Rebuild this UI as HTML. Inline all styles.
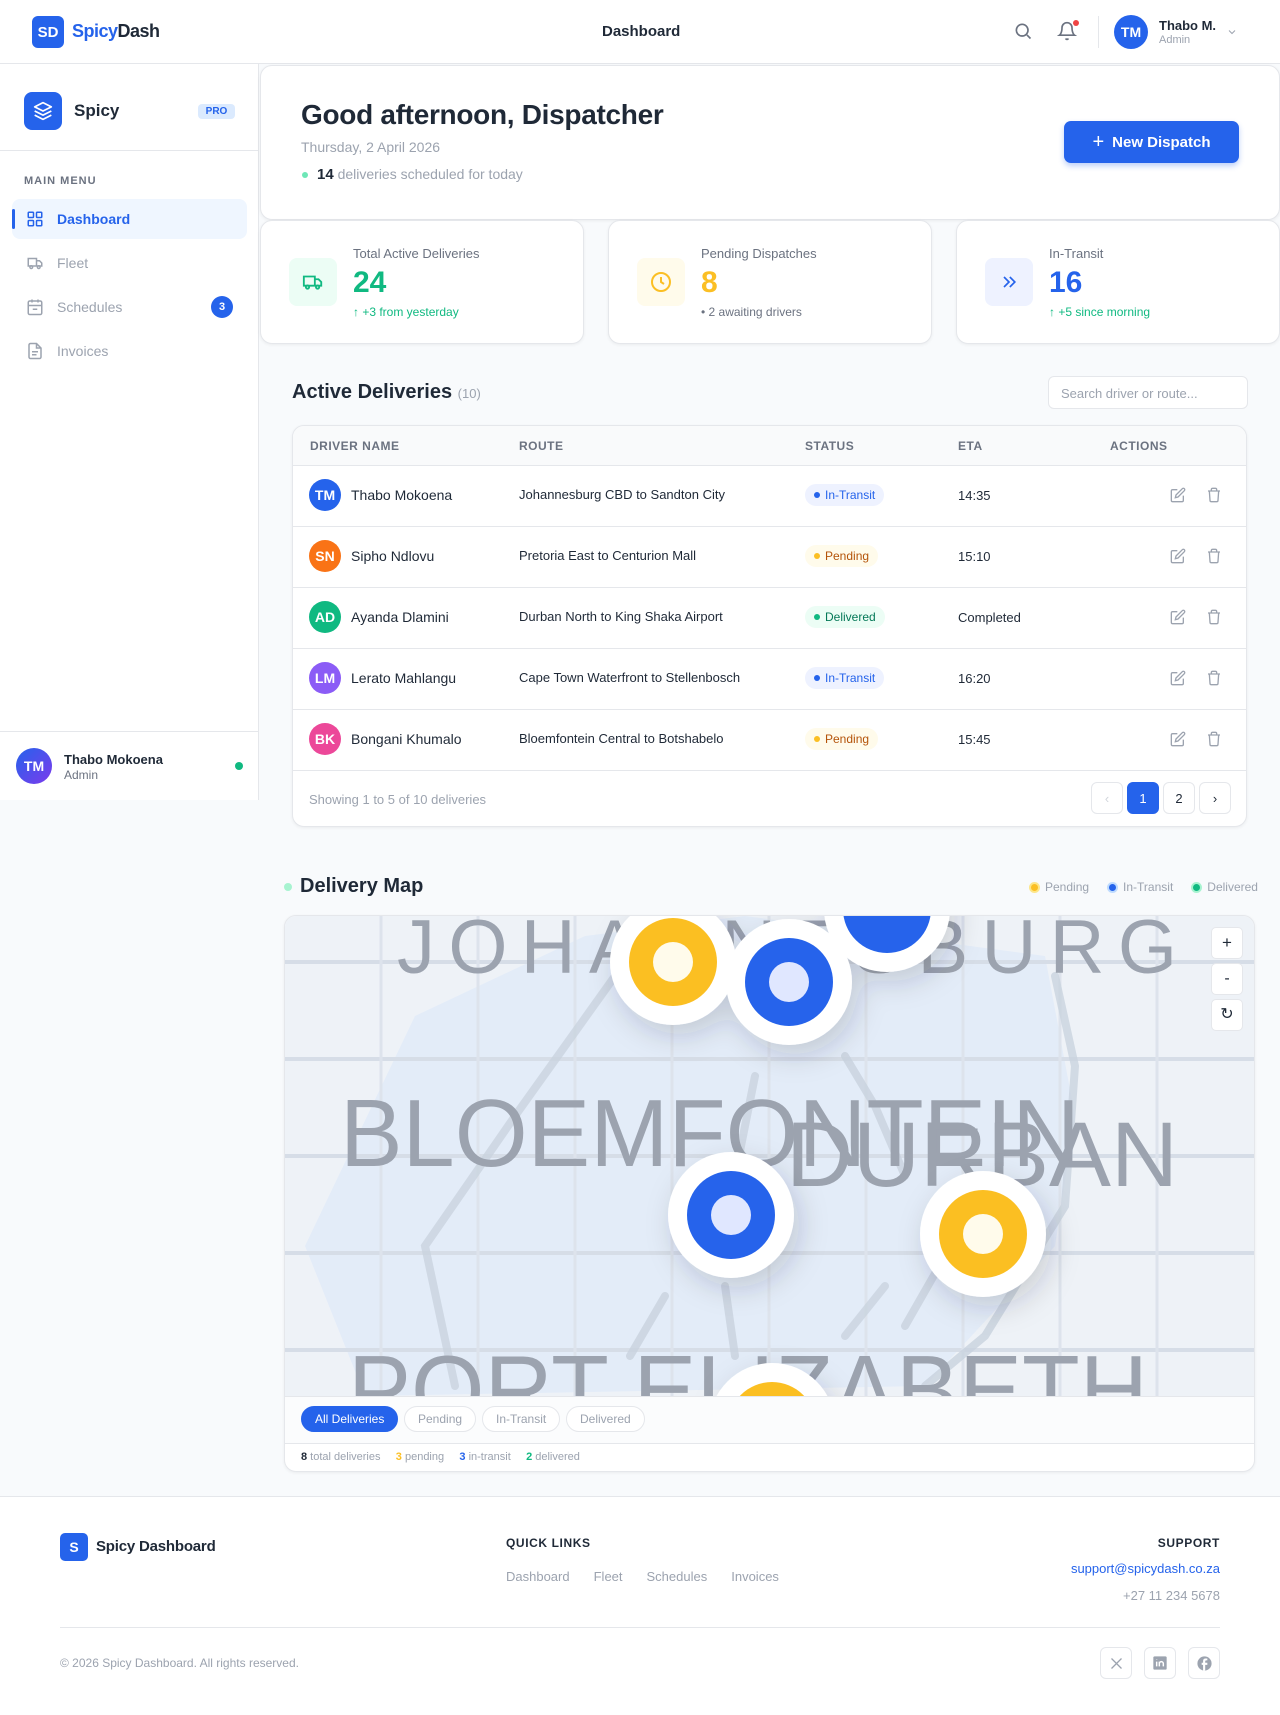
<!DOCTYPE html>
<html><head><meta charset="utf-8">
<style>
*{box-sizing:border-box;margin:0;padding:0}
body{width:1280px;height:1715px;background:#f8fafc;font-family:"Liberation Sans",sans-serif;color:#1f2937;position:relative;overflow:hidden}
.abs{position:absolute}
.hdr{left:0;top:0;width:1280px;height:64px;background:#fff;border-bottom:1px solid #e5e7eb}
.side{left:0;top:64px;width:259px;height:736px;background:#fff;border-right:1px solid #e5e7eb}
.card{background:#fff;border:1px solid #e5e7eb;border-radius:12px;box-shadow:0 1px 3px rgba(0,0,0,.06)}
.nav{left:12px;width:235px;height:40px;border-radius:8px;display:flex;align-items:center;padding-left:14px;font-size:14px;color:#9ca3af}
.nav svg{margin-right:13px}
.th{font-size:12px;color:#6b7280;letter-spacing:.5px;font-weight:bold;top:439px}
.row{left:293px;width:953px;height:61px;border-top:1px solid #e5e7eb}
.av{width:32px;height:32px;border-radius:50%;color:#fff;font-weight:bold;font-size:14px;display:flex;align-items:center;justify-content:center}
.badge{height:22px;border-radius:11px;font-size:12px;padding:0 9px;display:flex;align-items:center}
.badge i{width:6px;height:6px;border-radius:50%;display:inline-block;margin-right:5px}
.chip{height:26px;border-radius:13px;border:1px solid #e5e7eb;font-size:12px;color:#9ca3af;display:flex;align-items:center;padding:0 13px;background:#fff}
.pg{width:32px;height:32px;border:1px solid #e5e7eb;border-radius:6px;display:flex;align-items:center;justify-content:center;font-size:13px;background:#fff}
.soc{width:32px;height:32px;border:1px solid #e5e7eb;border-radius:6px;display:flex;align-items:center;justify-content:center}
</style></head><body>

<!-- header -->
<div class="abs hdr"></div>
<div class="abs" style="left:32px;top:16px;width:32px;height:32px;background:#2563eb;border-radius:6px;color:#fff;font-weight:bold;font-size:15px;display:flex;align-items:center;justify-content:center">SD</div>
<div class="abs" style="left:72px;top:21px;font-size:18px;font-weight:bold;letter-spacing:-.5px"><span style="color:#2563eb">Spicy</span>Dash</div>
<div class="abs" style="left:602px;top:23px;font-size:15px;font-weight:bold">Dashboard</div>
<svg class="abs" style="left:1013px;top:21px" width="20" height="20" viewBox="0 0 24 24" fill="none" stroke="#6b7280" stroke-width="2"><circle cx="11" cy="11" r="7"/><path d="M21 21l-4.3-4.3"/></svg>
<svg class="abs" style="left:1057px;top:21px" width="20" height="20" viewBox="0 0 24 24" fill="none" stroke="#6b7280" stroke-width="2"><path d="M6 8a6 6 0 0112 0c0 7 3 9 3 9H3s3-2 3-9M10.3 21a1.9 1.9 0 003.4 0"/></svg>
<div class="abs" style="left:1073px;top:20px;width:6px;height:6px;border-radius:50%;background:#ef4444"></div>
<div class="abs" style="left:1098px;top:16px;width:1px;height:32px;background:#e5e7eb"></div>
<div class="abs av" style="left:1114px;top:15px;width:34px;height:34px;background:#2563eb">TM</div>
<div class="abs" style="left:1159px;top:18px;font-size:13px;font-weight:bold">Thabo M.</div>
<div class="abs" style="left:1159px;top:34px;font-size:11px;color:#9ca3af">Admin</div>
<svg class="abs" style="left:1226px;top:26px" width="12" height="12" viewBox="0 0 24 24" fill="none" stroke="#9ca3af" stroke-width="2"><path d="M6 9l6 6 6-6"/></svg>

<!-- sidebar -->
<div class="abs side"></div>
<div class="abs" style="left:24px;top:92px;width:38px;height:38px;background:#2563eb;border-radius:8px;display:flex;align-items:center;justify-content:center"><svg width="20" height="20" viewBox="0 0 24 24" fill="none" stroke="#fff" stroke-width="2" stroke-linejoin="round"><path d="M12 2L2 7l10 5 10-5-10-5zM2 17l10 5 10-5M2 12l10 5 10-5"/></svg></div>
<div class="abs" style="left:74px;top:101px;font-size:17px;font-weight:bold">Spicy</div>
<div class="abs" style="left:198px;top:104px;width:37px;height:15px;background:#dbeafe;color:#2563eb;font-size:10px;font-weight:bold;border-radius:4px;text-align:center;line-height:15px">PRO</div>
<div class="abs" style="left:0;top:150px;width:259px;height:1px;background:#e5e7eb"></div>
<div class="abs" style="left:24px;top:175px;font-size:11px;font-weight:bold;color:#6b7280;letter-spacing:1px">MAIN MENU</div>
<div class="abs nav" style="top:199px;background:#eff6ff;color:#2563eb;font-weight:bold"><svg width="18" height="18" viewBox="0 0 24 24" fill="none" stroke="#2563eb" stroke-width="2"><rect x="3" y="3" width="7" height="7" rx="1"/><rect x="14" y="3" width="7" height="7" rx="1"/><rect x="3" y="14" width="7" height="7" rx="1"/><rect x="14" y="14" width="7" height="7" rx="1"/></svg>Dashboard</div>
<div class="abs" style="left:12px;top:209px;width:3px;height:20px;background:#2563eb;border-radius:2px"></div>
<div class="abs nav" style="top:243px"><svg width="18" height="18" viewBox="0 0 24 24" fill="none" stroke="#9ca3af" stroke-width="2"><path d="M3 6h11v10H3zM14 9h4l3 3v4h-7"/><circle cx="7" cy="17.5" r="1.8"/><circle cx="17" cy="17.5" r="1.8"/></svg>Fleet</div>
<div class="abs nav" style="top:287px"><svg width="18" height="18" viewBox="0 0 24 24" fill="none" stroke="#9ca3af" stroke-width="2"><rect x="3" y="4" width="18" height="18" rx="2"/><path d="M16 2v4M8 2v4M3 10h18M9 15h6"/></svg>Schedules</div>
<div class="abs av" style="left:211px;top:296px;width:22px;height:22px;background:#2563eb;font-size:11px">3</div>
<div class="abs nav" style="top:331px"><svg width="18" height="18" viewBox="0 0 24 24" fill="none" stroke="#9ca3af" stroke-width="2"><path d="M14 2H6a2 2 0 00-2 2v16a2 2 0 002 2h12a2 2 0 002-2V8zM14 2v6h6M8 13h8M8 17h6"/></svg>Invoices</div>
<div class="abs" style="left:0;top:731px;width:259px;height:1px;background:#e5e7eb"></div>
<div class="abs av" style="left:16px;top:748px;width:36px;height:36px;background:linear-gradient(135deg,#2563eb,#7c3aed)">TM</div>
<div class="abs" style="left:64px;top:752px;font-size:13px;font-weight:bold">Thabo Mokoena</div>
<div class="abs" style="left:64px;top:768px;font-size:12px;color:#6b7280">Admin</div>
<div class="abs" style="left:235px;top:762px;width:8px;height:8px;border-radius:50%;background:#10b981"></div>

<!-- hero -->
<div class="abs card" style="left:260px;top:65px;width:1020px;height:155px"></div>
<div class="abs" style="left:301px;top:99px;font-size:28px;font-weight:bold;letter-spacing:-.3px">Good afternoon, Dispatcher</div>
<div class="abs" style="left:301px;top:139px;font-size:14px;color:#9ca3af">Thursday, 2 April 2026</div>
<div class="abs" style="left:302px;top:172px;width:6px;height:6px;border-radius:50%;background:#6ee7b7"></div>
<div class="abs" style="left:317px;top:166px;font-size:14px;color:#9ca3af"><b style="color:#1f2937;font-size:15px">14</b> deliveries scheduled for today</div>
<div class="abs" style="left:1064px;top:121px;width:175px;height:42px;background:#2563eb;border-radius:7px;color:#fff;font-size:15px;font-weight:bold;display:flex;align-items:center;justify-content:center;box-shadow:0 3px 6px rgba(37,99,235,.3)"><span style="font-size:20px;margin-right:8px;font-weight:normal">+</span>New Dispatch</div>

<!-- stats -->
<div class="abs card" style="left:260px;top:220px;width:324px;height:124px"></div>
<div class="abs card" style="left:608px;top:220px;width:324px;height:124px"></div>
<div class="abs card" style="left:956px;top:220px;width:324px;height:124px"></div>
<div class="abs" style="left:289px;top:258px;width:48px;height:48px;border-radius:8px;background:#ecfdf5;display:flex;align-items:center;justify-content:center"><svg width="22" height="22" viewBox="0 0 24 24" fill="none" stroke="#10b981" stroke-width="2"><path d="M2 6h12v10H2zM14 9h4l3 3v4h-7"/><circle cx="6" cy="17.5" r="1.8"/><circle cx="17" cy="17.5" r="1.8"/></svg></div>
<div class="abs" style="left:353px;top:246px;font-size:13px;color:#6b7280">Total Active Deliveries</div>
<div class="abs" style="left:353px;top:266px;font-size:30px;font-weight:bold;color:#10b981">24</div>
<div class="abs" style="left:353px;top:305px;font-size:12px;color:#10b981">↑ +3 from yesterday</div>
<div class="abs" style="left:637px;top:258px;width:48px;height:48px;border-radius:8px;background:#fffbeb;display:flex;align-items:center;justify-content:center"><svg width="24" height="24" viewBox="0 0 24 24" fill="none" stroke="#fbbf24" stroke-width="2"><circle cx="12" cy="12" r="9"/><path d="M12 7v5l3 2"/></svg></div>
<div class="abs" style="left:701px;top:246px;font-size:13px;color:#6b7280">Pending Dispatches</div>
<div class="abs" style="left:701px;top:266px;font-size:30px;font-weight:bold;color:#fbbf24">8</div>
<div class="abs" style="left:701px;top:305px;font-size:12px;color:#6b7280">• 2 awaiting drivers</div>
<div class="abs" style="left:985px;top:258px;width:48px;height:48px;border-radius:8px;background:#eef2ff;display:flex;align-items:center;justify-content:center"><svg width="20" height="20" viewBox="0 0 24 24" fill="none" stroke="#2563eb" stroke-width="2"><path d="M6 6l6 6-6 6M13 6l6 6-6 6"/></svg></div>
<div class="abs" style="left:1049px;top:246px;font-size:13px;color:#6b7280">In-Transit</div>
<div class="abs" style="left:1049px;top:266px;font-size:30px;font-weight:bold;color:#2563eb">16</div>
<div class="abs" style="left:1049px;top:305px;font-size:12px;color:#10b981">↑ +5 since morning</div>

<!-- table -->
<div class="abs" style="left:292px;top:381px;font-size:20px;font-weight:bold">Active Deliveries <span style="font-size:13px;color:#9ca3af;font-weight:normal">(10)</span></div>
<div class="abs" style="left:1048px;top:376px;width:200px;height:33px;border:1px solid #e5e7eb;border-radius:6px;background:#fff;font-size:13px;color:#9ca3af;padding:9px 12px">Search driver or route...</div>
<div class="abs card" style="left:292px;top:425px;width:955px;height:402px;overflow:hidden"><div style="height:40px;background:#f9fafb"></div></div>
<div class="abs th" style="left:310px">DRIVER NAME</div>
<div class="abs th" style="left:519px">ROUTE</div>
<div class="abs th" style="left:805px">STATUS</div>
<div class="abs th" style="left:958px">ETA</div>
<div class="abs th" style="left:1110px">ACTIONS</div>

<div class="abs row" style="top:465px"></div>
<div class="abs row" style="top:526px"></div>
<div class="abs row" style="top:587px"></div>
<div class="abs row" style="top:648px"></div>
<div class="abs row" style="top:709px"></div>
<div class="abs row" style="top:770px"></div>

<div class="abs" style="left:309px;top:479px;width:900px;height:300px;font-size:14px">
 <div style="position:absolute;top:0"><div class="av" style="background:#2563eb">TM</div></div>
 <div style="position:absolute;left:42px;top:8px">Thabo Mokoena</div>
 <div style="position:absolute;left:210px;top:8px;font-size:13px">Johannesburg CBD to Sandton City</div>
 <div class="badge" style="position:absolute;left:496px;top:5px;background:#eef2ff;color:#2563eb"><i style="background:#2563eb"></i>In-Transit</div>
 <div style="position:absolute;left:649px;top:9px;font-size:13px">14:35</div>

 <div style="position:absolute;top:61px"><div class="av" style="background:#f97316">SN</div></div>
 <div style="position:absolute;left:42px;top:69px">Sipho Ndlovu</div>
 <div style="position:absolute;left:210px;top:69px;font-size:13px">Pretoria East to Centurion Mall</div>
 <div class="badge" style="position:absolute;left:496px;top:66px;background:#fffbeb;color:#b45309"><i style="background:#fbbf24"></i>Pending</div>
 <div style="position:absolute;left:649px;top:70px;font-size:13px">15:10</div>

 <div style="position:absolute;top:122px"><div class="av" style="background:#10b981">AD</div></div>
 <div style="position:absolute;left:42px;top:130px">Ayanda Dlamini</div>
 <div style="position:absolute;left:210px;top:130px;font-size:13px">Durban North to King Shaka Airport</div>
 <div class="badge" style="position:absolute;left:496px;top:127px;background:#ecfdf5;color:#047857"><i style="background:#10b981"></i>Delivered</div>
 <div style="position:absolute;left:649px;top:131px;font-size:13px">Completed</div>

 <div style="position:absolute;top:183px"><div class="av" style="background:#8b5cf6">LM</div></div>
 <div style="position:absolute;left:42px;top:191px">Lerato Mahlangu</div>
 <div style="position:absolute;left:210px;top:191px;font-size:13px">Cape Town Waterfront to Stellenbosch</div>
 <div class="badge" style="position:absolute;left:496px;top:188px;background:#eef2ff;color:#2563eb"><i style="background:#2563eb"></i>In-Transit</div>
 <div style="position:absolute;left:649px;top:192px;font-size:13px">16:20</div>

 <div style="position:absolute;top:244px"><div class="av" style="background:#ec4899">BK</div></div>
 <div style="position:absolute;left:42px;top:252px">Bongani Khumalo</div>
 <div style="position:absolute;left:210px;top:252px;font-size:13px">Bloemfontein Central to Botshabelo</div>
 <div class="badge" style="position:absolute;left:496px;top:249px;background:#fffbeb;color:#b45309"><i style="background:#fbbf24"></i>Pending</div>
 <div style="position:absolute;left:649px;top:253px;font-size:13px">15:45</div>
</div>
<svg width="0" height="0" style="position:absolute"><defs>
<g id="ed"><path d="M11 4H4a2 2 0 00-2 2v14a2 2 0 002 2h14a2 2 0 002-2v-7M18.5 2.5a2.1 2.1 0 013 3L12 15l-4 1 1-4z" fill="none" stroke="#9ca3af" stroke-width="2"/></g>
<g id="tr"><path d="M3 6h18M8 6V4a2 2 0 012-2h4a2 2 0 012 2v2M19 6l-1 14a2 2 0 01-2 2H8a2 2 0 01-2-2L5 6" fill="none" stroke="#9ca3af" stroke-width="2"/></g>
</defs></svg>
<svg class="abs" style="left:1170px;top:487px" width="16" height="16" viewBox="0 0 24 24"><use href="#ed"/></svg><svg class="abs" style="left:1206px;top:487px" width="16" height="16" viewBox="0 0 24 24"><use href="#tr"/></svg>
<svg class="abs" style="left:1170px;top:548px" width="16" height="16" viewBox="0 0 24 24"><use href="#ed"/></svg><svg class="abs" style="left:1206px;top:548px" width="16" height="16" viewBox="0 0 24 24"><use href="#tr"/></svg>
<svg class="abs" style="left:1170px;top:609px" width="16" height="16" viewBox="0 0 24 24"><use href="#ed"/></svg><svg class="abs" style="left:1206px;top:609px" width="16" height="16" viewBox="0 0 24 24"><use href="#tr"/></svg>
<svg class="abs" style="left:1170px;top:670px" width="16" height="16" viewBox="0 0 24 24"><use href="#ed"/></svg><svg class="abs" style="left:1206px;top:670px" width="16" height="16" viewBox="0 0 24 24"><use href="#tr"/></svg>
<svg class="abs" style="left:1170px;top:731px" width="16" height="16" viewBox="0 0 24 24"><use href="#ed"/></svg><svg class="abs" style="left:1206px;top:731px" width="16" height="16" viewBox="0 0 24 24"><use href="#tr"/></svg>
<div class="abs" style="left:309px;top:792px;font-size:13px;color:#9ca3af">Showing 1 to 5 of 10 deliveries</div>
<div class="abs pg" style="left:1091px;top:782px;color:#d1d5db">‹</div>
<div class="abs pg" style="left:1127px;top:782px;background:#2563eb;color:#fff;border-color:#2563eb">1</div>
<div class="abs pg" style="left:1163px;top:782px">2</div>
<div class="abs pg" style="left:1199px;top:782px">›</div>

<!-- map -->
<div class="abs" style="left:284px;top:883px;width:8px;height:8px;border-radius:50%;background:#a7f3d0"></div>
<div class="abs" style="left:300px;top:875px;font-size:20px;font-weight:bold">Delivery Map</div>
<div class="abs" style="left:1029px;top:880px;font-size:12px;color:#9ca3af;display:flex;align-items:center;gap:5px">
<i style="width:11px;height:11px;border-radius:50%;background:#fbbf24;border:2px solid #fde68a"></i>Pending<span style="width:8px"></span>
<i style="width:11px;height:11px;border-radius:50%;background:#2563eb;border:2px solid #bfdbfe"></i>In-Transit<span style="width:8px"></span>
<i style="width:11px;height:11px;border-radius:50%;background:#10b981;border:2px solid #a7f3d0"></i>Delivered</div>
<div class="abs card" style="left:284px;top:915px;width:971px;height:557px;overflow:hidden">
<svg width="971" height="480" style="display:block;background:#eef2f7">
<defs><filter id="sh" x="-50%" y="-50%" width="200%" height="200%"><feDropShadow dx="6" dy="10" stdDeviation="14" flood-color="#1e293b" flood-opacity=".18"/></filter></defs>
<path d="M300 20 L460 0 L760 40 L790 200 L770 330 L640 470 L80 480 L20 330 L130 100 Z" fill="#e3ecf8"/>
<g stroke="#d6dde7" stroke-width="4">
<line x1="0" y1="46" x2="971" y2="46"/><line x1="0" y1="143" x2="971" y2="143"/><line x1="0" y1="240" x2="971" y2="240"/><line x1="0" y1="337" x2="971" y2="337"/><line x1="0" y1="434" x2="971" y2="434"/>
</g><g stroke="#dde3ec" stroke-width="3">
<line x1="96" y1="0" x2="96" y2="480"/><line x1="193" y1="0" x2="193" y2="480"/><line x1="290" y1="0" x2="290" y2="480"/><line x1="387" y1="0" x2="387" y2="480"/><line x1="484" y1="0" x2="484" y2="480"/><line x1="581" y1="0" x2="581" y2="480"/><line x1="678" y1="0" x2="678" y2="480"/><line x1="775" y1="0" x2="775" y2="480"/><line x1="872" y1="0" x2="872" y2="480"/>
</g>
<g fill="none" stroke="#c9d3df" stroke-width="8" stroke-linecap="round" opacity=".8">
<path d="M330 60 L230 200 L140 330 L170 470"/><path d="M770 60 L790 150 L780 290 L700 420 L640 470"/>
<path d="M560 140 L590 190 L620 260"/><path d="M470 160 L450 260 L410 330"/><path d="M380 380 L345 440"/><path d="M440 370 L450 440"/><path d="M600 370 L560 420"/><path d="M660 340 L620 410"/>
</g>
<g font-family="Liberation Sans,sans-serif" fill="#9ca3af">
<text x="112" y="57" font-size="76" textLength="780" lengthAdjust="spacing">JOHANNESBURG</text>
<text x="55" y="250" font-size="96" textLength="740" lengthAdjust="spacingAndGlyphs">BLOEMFONTEIN</text>
<text x="501" y="270" font-size="92" textLength="392" lengthAdjust="spacingAndGlyphs">DURBAN</text>
<text x="63" y="508" font-size="98" textLength="800" lengthAdjust="spacingAndGlyphs">PORT ELIZABETH</text>
</g>
<g filter="url(#sh)">
<circle cx="388" cy="46" r="63" fill="#fff"/><circle cx="388" cy="46" r="44" fill="#fbbf24"/><circle cx="388" cy="46" r="20" fill="#fffbeb"/>
<circle cx="504" cy="66" r="63" fill="#fff"/><circle cx="504" cy="66" r="44" fill="#2563eb"/><circle cx="504" cy="66" r="20" fill="#e0e7ff"/>
<circle cx="602" cy="-7" r="63" fill="#fff"/><circle cx="602" cy="-7" r="44" fill="#2563eb"/>
<circle cx="446" cy="299" r="63" fill="#fff"/><circle cx="446" cy="299" r="44" fill="#2563eb"/><circle cx="446" cy="299" r="20" fill="#e0e7ff"/>
<circle cx="698" cy="318" r="63" fill="#fff"/><circle cx="698" cy="318" r="44" fill="#fbbf24"/><circle cx="698" cy="318" r="20" fill="#fffbeb"/>
<circle cx="487" cy="510" r="63" fill="#fff"/><circle cx="487" cy="510" r="44" fill="#fbbf24"/>
</g>
</svg>
<div style="height:48px;background:#fbfcfd;border-top:1px solid #e5e7eb;border-bottom:1px solid #e5e7eb"></div>
</div>
<div class="abs" style="left:1211px;top:927px;width:32px;height:32px;background:#fff;border:1px solid #e5e7eb;border-radius:5px;text-align:center;line-height:30px;font-size:17px">+</div>
<div class="abs" style="left:1211px;top:963px;width:32px;height:32px;background:#fff;border:1px solid #e5e7eb;border-radius:5px;text-align:center;line-height:30px;font-size:16px">-</div>
<div class="abs" style="left:1211px;top:999px;width:32px;height:32px;background:#fff;border:1px solid #e5e7eb;border-radius:5px;text-align:center;line-height:30px;font-size:16px">↻</div>
<div class="abs chip" style="left:301px;top:1406px;background:#2563eb;color:#fff;border-color:#2563eb">All Deliveries</div>
<div class="abs chip" style="left:404px;top:1406px">Pending</div>
<div class="abs chip" style="left:482px;top:1406px">In-Transit</div>
<div class="abs chip" style="left:566px;top:1406px">Delivered</div>
<div class="abs" style="left:301px;top:1451px;font-size:11px;color:#9ca3af"><b style="color:#1f2937">8</b> total deliveries &nbsp;&nbsp;&nbsp; <b style="color:#fbbf24">3</b> pending &nbsp;&nbsp;&nbsp; <b style="color:#2563eb">3</b> in-transit &nbsp;&nbsp;&nbsp; <b style="color:#10b981">2</b> delivered</div>

<!-- footer -->
<div class="abs" style="left:0;top:1496px;width:1280px;height:219px;background:#fff;border-top:1px solid #e5e7eb"></div>
<div class="abs" style="left:60px;top:1533px;width:28px;height:28px;background:#2563eb;border-radius:5px;color:#fff;font-weight:bold;font-size:14px;text-align:center;line-height:28px">S</div>
<div class="abs" style="left:96px;top:1538px;font-size:15px;font-weight:bold;letter-spacing:-.2px">Spicy Dashboard</div>
<div class="abs" style="left:506px;top:1536px;font-size:12px;font-weight:bold;letter-spacing:.6px">QUICK LINKS</div>
<div class="abs" style="left:506px;top:1569px;font-size:13px;color:#9ca3af">Dashboard<span style="margin-left:24px">Fleet</span><span style="margin-left:24px">Schedules</span><span style="margin-left:24px">Invoices</span></div>
<div class="abs" style="right:60px;top:1536px;font-size:12px;font-weight:bold;letter-spacing:.6px">SUPPORT</div>
<div class="abs" style="right:60px;top:1561px;font-size:13px;color:#2563eb">support@spicydash.co.za</div>
<div class="abs" style="right:60px;top:1588px;font-size:13px;color:#9ca3af">+27 11 234 5678</div>
<div class="abs" style="left:60px;top:1627px;width:1160px;height:1px;background:#e5e7eb"></div>
<div class="abs" style="left:60px;top:1656px;font-size:12px;color:#9ca3af">© 2026 Spicy Dashboard. All rights reserved.</div>
<div class="abs soc" style="left:1100px;top:1647px"><svg width="15" height="15" viewBox="0 0 24 24" fill="none" stroke="#9ca3af" stroke-width="2"><path d="M4 4l16 16M20 4L4 20"/></svg></div>
<div class="abs soc" style="left:1144px;top:1647px"><svg width="16" height="16" viewBox="0 0 24 24"><rect x="2" y="2" width="20" height="20" rx="2" fill="#9ca3af"/><path d="M7 10v7M7 7v.5M11 17v-7M11 13a3 3 0 016 0v4" stroke="#fff" stroke-width="2.2" fill="none"/></svg></div>
<div class="abs soc" style="left:1188px;top:1647px"><svg width="17" height="17" viewBox="0 0 24 24"><circle cx="12" cy="12" r="10" fill="#9ca3af"/><path d="M13 22v-8h3v-3h-3V9c0-1 .5-1.5 1.5-1.5H16V5h-2.5C11 5 10 6.5 10 9v2H8v3h2v8" fill="#fff"/></svg></div>
</body></html>
